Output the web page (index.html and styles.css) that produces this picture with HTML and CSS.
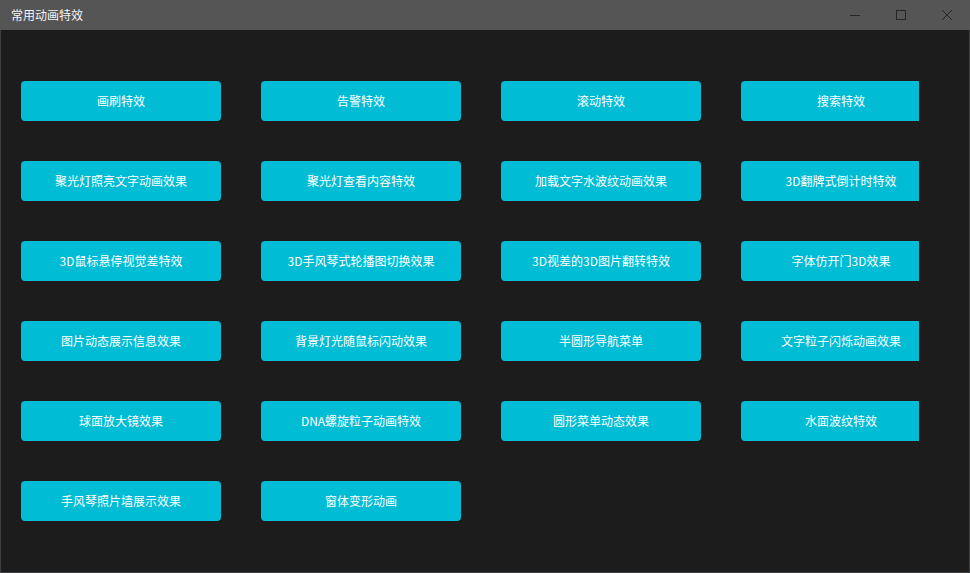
FILE: index.html
```html
<!DOCTYPE html>
<html lang="zh">
<head>
<meta charset="utf-8">
<title>常用动画特效</title>
<link rel="stylesheet" href="styles.css">
</head>
<body>
<div class="window">
  <div class="titlebar">
    <span class="title">常用动画特效</span>
    <div class="controls">
      <span class="ctl">
        <svg width="12" height="12" viewBox="0 0 12 12"><path d="M1 6.5h10" stroke="#262626" stroke-width="1" fill="none"/></svg>
      </span>
      <span class="ctl">
        <svg width="12" height="12" viewBox="0 0 12 12"><rect x="1.5" y="1.5" width="9" height="9" stroke="#262626" stroke-width="1" fill="none"/></svg>
      </span>
      <span class="ctl">
        <svg width="12" height="12" viewBox="0 0 12 12"><path d="M1 1L11 11M11 1L1 11" stroke="#262626" stroke-width="1" fill="none"/></svg>
      </span>
    </div>
  </div>
  <div class="content">
    <div class="grid">
      <button class="btn">画刷特效</button>
      <button class="btn">告警特效</button>
      <button class="btn">滚动特效</button>
      <button class="btn">搜索特效</button>
      <button class="btn">聚光灯照亮文字动画效果</button>
      <button class="btn">聚光灯查看内容特效</button>
      <button class="btn">加载文字水波纹动画效果</button>
      <button class="btn">3D翻牌式倒计时特效</button>
      <button class="btn">3D鼠标悬停视觉差特效</button>
      <button class="btn">3D手风琴式轮播图切换效果</button>
      <button class="btn">3D视差的3D图片翻转特效</button>
      <button class="btn">字体仿开门3D效果</button>
      <button class="btn">图片动态展示信息效果</button>
      <button class="btn">背景灯光随鼠标闪动效果</button>
      <button class="btn">半圆形导航菜单</button>
      <button class="btn">文字粒子闪烁动画效果</button>
      <button class="btn">球面放大镜效果</button>
      <button class="btn">DNA螺旋粒子动画特效</button>
      <button class="btn">圆形菜单动态效果</button>
      <button class="btn">水面波纹特效</button>
      <button class="btn">手风琴照片墙展示效果</button>
      <button class="btn">窗体变形动画</button>
    </div>
  </div>
</div>
</body>
</html>
```

FILE: styles.css
```css
* { box-sizing: border-box; }
html, body {
  margin: 0;
  padding: 0;
  background: #1c1c1c;
}
body {
  font-family: "Noto Sans CJK SC", "Noto Sans", sans-serif;
  width: 970px;
  height: 573px;
  overflow: hidden;
}
.window {
  width: 970px;
  height: 573px;
  border: 1px solid #3a3f44;
  border-top: none;
  display: flex;
  flex-direction: column;
  background: #1c1c1c;
}
.titlebar {
  height: 30px;
  background: #555555;
  display: flex;
  align-items: center;
  justify-content: space-between;
  flex: none;
  margin: 0 -1px;
}
.title {
  color: #f4f4f4;
  font-size: 12px;
  padding-left: 11px;
  line-height: 30px;
}
.controls {
  display: flex;
  height: 30px;
}
.ctl {
  width: 46px;
  height: 30px;
  display: flex;
  align-items: center;
  justify-content: center;
}
.content {
  flex: 1;
  width: 918px;
  overflow: hidden;
  padding: 51px 0 0 20px;
}
.grid {
  display: grid;
  grid-template-columns: repeat(4, 200px);
  grid-auto-rows: 40px;
  column-gap: 40px;
  row-gap: 40px;
  width: 920px;
}
.btn {
  width: 200px;
  height: 40px;
  border: none;
  border-radius: 4px;
  background: #00bcd4;
  color: #ffffff;
  font-family: "Noto Sans CJK SC", "Noto Sans", sans-serif;
  font-size: 12px;
  padding: 0 0 1px 0;
  margin: 0;
  text-align: center;
  line-height: 39px;
}
```
